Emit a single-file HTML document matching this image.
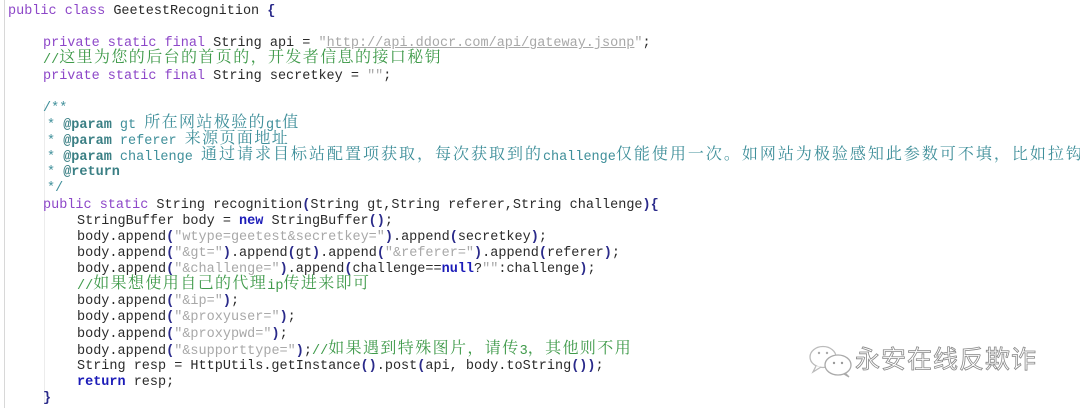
<!DOCTYPE html>
<html><head><meta charset="utf-8"><style>
html,body{margin:0;padding:0;background:#fff;width:1080px;height:408px;overflow:hidden}
#g{position:absolute;left:4px;top:0;width:1px;height:408px;background:#d8d8d8}
#g2{position:absolute;left:44px;top:104px;width:1px;height:300px;background:#ececec}
#code{position:absolute;left:0;top:4px;font-family:"Liberation Mono",monospace;font-size:13.5px;color:#2a2a2a}
#code div{height:16.13px;line-height:16.13px;white-space:pre;overflow:visible;position:relative}
.l0{padding-left:8px}.l1{padding-left:43px}.l2{padding-left:77px}.lj{padding-left:47px}
.k{color:#8d47c8}
.b{color:#1b1bb8;font-weight:bold}
.s{color:#a8a8a8}
.c{color:#3f9a4a}
.d{color:#3f8f9a}
.t{color:#3a7f84;font-weight:bold}
.z{font-family:"Noto Serif CJK SC","Noto Sans CJK SC",serif;font-size:16px;letter-spacing:1.4px;line-height:10px;position:relative;top:-1px}
.w2{letter-spacing:2px}
.u{text-decoration:underline}
.p{font-weight:bold;color:#2a2a8a}
#w{position:absolute;left:855px;top:343px;font-family:"Noto Sans CJK SC",sans-serif;font-size:25px;color:#fff;-webkit-text-stroke:0.8px #888;letter-spacing:1px;line-height:30px}
</style></head><body>
<div id="g"></div><div id="g2"></div>
<div id="code">
<div class="l0"><span class="k">public class</span> GeetestRecognition <span class="p">{</span></div>
<div></div>
<div class="l1"><span class="k">private static final</span> String api = <span class="s">"<span class="u">http://api.ddocr.com/api/gateway.jsonp</span>"</span>;</div>
<div class="l1"><span class="c">//<span class="z">这里为您的后台的首页的，开发者信息的接口秘钥</span></span></div>
<div class="l1"><span class="k">private static final</span> String secretkey = <span class="s">""</span>;</div>
<div></div>
<div class="l1"><span class="d">/**</span></div>
<div class="lj"><span class="d">* <span class="t">@param</span> gt <span class="z">所在网站极验的</span>gt<span class="z">值</span></span></div>
<div class="lj"><span class="d">* <span class="t">@param</span> referer <span class="z">来源页面地址</span></span></div>
<div class="lj"><span class="d">* <span class="t">@param</span> challenge <span class="z w2">通过请求目标站配置项获取，每次获取到的</span>challenge<span class="z w2">仅能使用一次。如网站为极验感知此参数可不填，比如拉钩</span></span></div>
<div class="lj"><span class="d">* <span class="t">@return</span></span></div>
<div class="lj"><span class="d">*/</span></div>
<div class="l1"><span class="k">public static</span> String recognition<span class="p">(</span>String gt,String referer,String challenge<span class="p">){</span></div>
<div class="l2">StringBuffer body = <span class="b">new</span> StringBuffer<span class="p">()</span>;</div>
<div class="l2">body.append<span class="p">(</span><span class="s">"wtype=geetest&amp;secretkey="</span><span class="p">)</span>.append<span class="p">(</span>secretkey<span class="p">)</span>;</div>
<div class="l2">body.append<span class="p">(</span><span class="s">"&amp;gt="</span><span class="p">)</span>.append<span class="p">(</span>gt<span class="p">)</span>.append<span class="p">(</span><span class="s">"&amp;referer="</span><span class="p">)</span>.append<span class="p">(</span>referer<span class="p">)</span>;</div>
<div class="l2">body.append<span class="p">(</span><span class="s">"&amp;challenge="</span><span class="p">)</span>.append<span class="p">(</span>challenge==<span class="b">null</span>?<span class="s">""</span>:challenge<span class="p">)</span>;</div>
<div class="l2"><span class="c">//<span class="z">如果想使用自己的代理</span>ip<span class="z">传进来即可</span></span></div>
<div class="l2">body.append<span class="p">(</span><span class="s">"&amp;ip="</span><span class="p">)</span>;</div>
<div class="l2">body.append<span class="p">(</span><span class="s">"&amp;proxyuser="</span><span class="p">)</span>;</div>
<div class="l2">body.append<span class="p">(</span><span class="s">"&amp;proxypwd="</span><span class="p">)</span>;</div>
<div class="l2">body.append<span class="p">(</span><span class="s">"&amp;supporttype="</span><span class="p">)</span>;<span class="c">//<span class="z">如果遇到特殊图片，请传</span>3<span class="z">，其他则不用</span></span></div>
<div class="l2">String resp = HttpUtils.getInstance<span class="p">()</span>.post<span class="p">(</span>api, body.toString<span class="p">())</span>;</div>
<div class="l2"><span class="b">return</span> resp;</div>
<div class="l1"><span class="p">}</span></div>
</div>
<svg style="position:absolute;left:808px;top:345px" width="48" height="34" viewBox="0 0 48 34">
<ellipse cx="15" cy="12" rx="13" ry="10.5" fill="#fff" stroke="#bbb" stroke-width="1.3"/>
<path d="M8 21 L5 27 L13 22" fill="#fff" stroke="#bbb" stroke-width="1.3"/>
<ellipse cx="30" cy="20" rx="13" ry="10" fill="#fff" stroke="#aaa" stroke-width="1.3"/>
<path d="M37 28 L41 32 L36 29" fill="none" stroke="#aaa" stroke-width="1.3"/>
<circle cx="11" cy="8" r="1.2" fill="#aaa"/><circle cx="19" cy="8" r="1.2" fill="#aaa"/>
<circle cx="26" cy="18" r="1.2" fill="#999"/><circle cx="34" cy="18" r="1.2" fill="#999"/>
</svg>
<div id="w">永安在线反欺诈</div>
</body></html>
